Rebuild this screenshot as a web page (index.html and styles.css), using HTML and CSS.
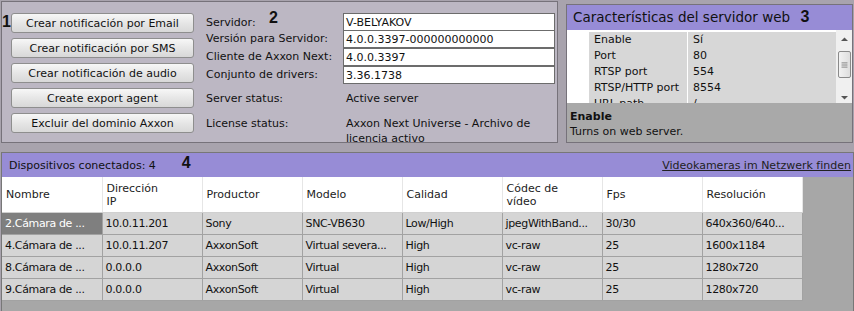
FILE: index.html
```html
<!DOCTYPE html>
<html lang="es">
<head>
  <meta charset="UTF-8">
  <title>Servidor</title>
  <link rel="stylesheet" href="styles.css">
</head>
<body>
  <div class="top">
    <div class="server-panel">
      <div class="actions">
        <span class="mark mark-1">1</span>
        <div class="buttons">
          <button class="btn">Crear notificación por Email</button>
          <button class="btn">Crear notificación por SMS</button>
          <button class="btn">Crear notificación de audio</button>
          <button class="btn">Create export agent</button>
          <button class="btn">Excluir del dominio Axxon</button>
        </div>
      </div>
      <div class="info">
        <div class="fields">
          <div class="label">Servidor: <span class="mark mark-2">2</span></div>
          <div class="value">V-BELYAKOV</div>
          <div class="label">Versión para Servidor:</div>
          <div class="value">4.0.0.3397-000000000000</div>
          <div class="label">Cliente de Axxon Next:</div>
          <div class="value">4.0.0.3397</div>
          <div class="label">Conjunto de drivers:</div>
          <div class="value">3.36.1738</div>
        </div>
        <div class="status">
          <div class="label">Server status:</div>
          <div class="text">Active server</div>
        </div>
        <div class="status license">
          <div class="label">License status:</div>
          <div class="text">Axxon Next Universe - Archivo de licencia activo</div>
        </div>
      </div>
    </div>

    <div class="web-panel">
      <div class="web-title">Características del servidor web <span class="mark mark-3">3</span></div>
      <div class="props">
        <div class="props-grid">
          <div class="prop"><span class="pname">Enable</span><span class="pval">Sí</span></div>
          <div class="prop"><span class="pname">Port</span><span class="pval">80</span></div>
          <div class="prop"><span class="pname">RTSP port</span><span class="pval">554</span></div>
          <div class="prop"><span class="pname">RTSP/HTTP port</span><span class="pval">8554</span></div>
          <div class="prop"><span class="pname">URL path</span><span class="pval">/</span></div>
        </div>
        <div class="scrollbar">
          <svg class="arrow" width="15" height="10" viewBox="0 0 15 10"><path d="M4 7 L7.5 3.5 L11 7 Z" fill="#555"/></svg>
          <div class="thumb">
            <svg width="13" height="10" viewBox="0 0 13 10"><path d="M3 2.5 H10 M3 5 H10 M3 7.5 H10" stroke="#777" stroke-width="1"/></svg>
          </div>
          <div class="track"></div>
          <svg class="arrow" width="15" height="10" viewBox="0 0 15 10"><path d="M4 3 L7.5 6.5 L11 3 Z" fill="#555"/></svg>
        </div>
      </div>
      <div class="desc">
        <div class="desc-title">Enable</div>
        <div>Turns on web server.</div>
      </div>
    </div>
  </div>

  <div class="devices">
    <div class="devices-bar">
      <span>Dispositivos conectados: 4</span>
      <span class="mark mark-4">4</span>
      <a class="find-link" href="#">Videokameras im Netzwerk finden</a>
    </div>
    <table class="grid">
      <colgroup>
        <col><col><col><col><col><col><col><col>
      </colgroup>
      <thead>
        <tr>
          <th>Nombre</th><th>Dirección IP</th><th>Productor</th><th>Modelo</th>
          <th>Calidad</th><th>Códec de vídeo</th><th>Fps</th><th>Resolución</th>
        </tr>
      </thead>
      <tbody>
        <tr>
          <td class="selected">2.Cámara de ...</td><td>10.0.11.201</td><td>Sony</td><td>SNC-VB630</td>
          <td>Low/High</td><td>jpegWithBand...</td><td>30/30</td><td>640x360/640...</td>
        </tr>
        <tr>
          <td>4.Cámara de ...</td><td>10.0.11.207</td><td>AxxonSoft</td><td>Virtual severa...</td>
          <td>High</td><td>vc-raw</td><td>25</td><td>1600x1184</td>
        </tr>
        <tr>
          <td>8.Cámara de ...</td><td>0.0.0.0</td><td>AxxonSoft</td><td>Virtual</td>
          <td>High</td><td>vc-raw</td><td>25</td><td>1280x720</td>
        </tr>
        <tr>
          <td>9.Cámara de ...</td><td>0.0.0.0</td><td>AxxonSoft</td><td>Virtual</td>
          <td>High</td><td>vc-raw</td><td>25</td><td>1280x720</td>
        </tr>
      </tbody>
    </table>
  </div>
</body>
</html>
```

FILE: styles.css
```css
:root {
  --outer-bg: #a8a3ad;
  --panel-bg: #bcb7c3;
  --panel-border: #76727a;
  --purple: #978cd6;
  --cell-bg: #d5d5d5;
  --grid-line: #a2a2a2;
}

body {
  margin: 0;
  width: 854px;
  height: 311px;
  overflow: hidden;
  background-color: var(--outer-bg);
  font-family: 'DejaVu Sans', Verdana, sans-serif;
  font-size: 11px;
  color: #111;
}

.mark {
  font-family: 'Liberation Sans', Arial, sans-serif;
  font-weight: bold;
  font-size: 16px;
  color: #111;
}

/* top area */

.top {
  display: flex;
  height: 144px;
  padding: 1px 0 0 1px;
  box-sizing: border-box;
}

.server-panel {
  width: 557px;
  height: 142px;
  box-sizing: border-box;
  border: 1px solid var(--panel-border);
  background-color: var(--panel-bg);
  display: flex;
}

.actions {
  display: flex;
  width: 198px;
  padding-top: 11px;
}

.mark-1 {
  width: 9px;
  line-height: 16px;
  margin-top: 1px;
}

.buttons {
  display: flex;
  flex-direction: column;
  gap: 5px;
}

.btn {
  width: 183px;
  height: 20px;
  padding: 0;
  font-family: inherit;
  font-size: 11px;
  color: #111;
  border: 1px solid #8e8e8e;
  border-radius: 3px;
  background: linear-gradient(#f7f7f7, #e6e6e6 50%, #d8d8d8);
}

.info {
  padding: 11px 0 0 6px;
}

.fields {
  display: grid;
  grid-template-columns: 137px 212px;
}

.fields .label {
  height: 18px;
  line-height: 16px;
}

.mark-2 {
  margin-left: 10px;
  position: relative;
  top: -3px;
}

.fields .value {
  height: 18px;
  box-sizing: border-box;
  border: 1px solid #6c6c6c;
  margin-top: -1px;
  background: #fff;
  padding-left: 2px;
  line-height: 17px;
}

.fields .value:nth-child(2) {
  margin-top: 0;
}

.status {
  display: grid;
  grid-template-columns: 137px 212px;
  margin-top: 6px;
  line-height: 15px;
}

.status.license {
  margin-top: 10px;
}

.status .text {
  padding-left: 3px;
}

/* web server panel */

.web-panel {
  margin: 3px 0 0 8px;
  width: 287px;
  height: 139px;
  box-sizing: border-box;
  border: 1px solid var(--panel-border);
  background-color: #a9a9a9;
  display: flex;
  flex-direction: column;
}

.web-title {
  background-color: var(--purple);
  height: 25px;
  line-height: 24px;
  padding-left: 6px;
  font-size: 13.5px;
  color: #111;
}

.mark-3 {
  margin-left: 6px;
}

.props {
  display: flex;
  height: 73px;
  background: #fff;
  overflow: hidden;
}

.props-grid {
  flex: 1;
  padding-left: 22px;
}

.prop {
  display: grid;
  grid-template-columns: 98px 1fr;
  height: 16px;
  line-height: 16px;
  border-top: 1px solid #fff;
  box-sizing: border-box;
}

.prop:first-child {
  height: 17px;
  border-top-width: 2px;
}

.pname, .pval {
  background: #d7d7d7;
  padding-left: 5px;
}

.pval {
  border-left: 1px solid #fff;
}

.scrollbar {
  width: 16px;
  display: flex;
  flex-direction: column;
  align-items: center;
  background: #f0f0f0;
  padding-top: 4px;
}

.thumb {
  width: 13px;
  height: 27px;
  margin-top: 7px;
  box-sizing: border-box;
  border: 1px solid #8a8a8a;
  border-radius: 2px;
  background: linear-gradient(90deg, #f2f2f2, #dedede);
  display: flex;
  align-items: center;
  justify-content: center;
}

.track {
  flex: 1;
}

.desc {
  padding: 6px 0 0 3px;
  line-height: 15px;
  color: #111;
}

.desc-title {
  font-weight: bold;
}

/* devices */

.devices {
  margin: 8px 0 0 1px;
  width: 853px;
  height: 159px;
  box-sizing: border-box;
  border: 1px solid #777;
  border-bottom: none;
  background-color: #a7a7a7;
}

.devices-bar {
  display: flex;
  align-items: center;
  height: 24px;
  background-color: var(--purple);
  padding: 0 2px 0 7px;
}

.mark-4 {
  margin-left: 26px;
  position: relative;
  top: -2px;
}

.find-link {
  margin-left: auto;
  color: #222;
  text-decoration: underline;
}

.grid {
  border-collapse: collapse;
  table-layout: fixed;
  width: 800px;
}

.grid col {
  width: 100px;
}

.grid th {
  height: 35px;
  background: #fff;
  font-weight: normal;
  text-align: left;
  padding: 0 36px 0 4px;
  line-height: 13px;
  border-right: 1px solid #e6e6e6;
  border-bottom: 1px solid #d0d0d0;
  color: #222;
}

.grid td {
  height: 21px;
  background: var(--cell-bg);
  border: 1px solid var(--grid-line);
  padding: 0 0 0 3px;
  letter-spacing: -0.35px;
  white-space: nowrap;
  overflow: hidden;
  color: #111;
}

.grid td:first-child {
  border-left: none;
}

.grid td.selected {
  background: #7f7f7f;
  color: #fff;
}
```
